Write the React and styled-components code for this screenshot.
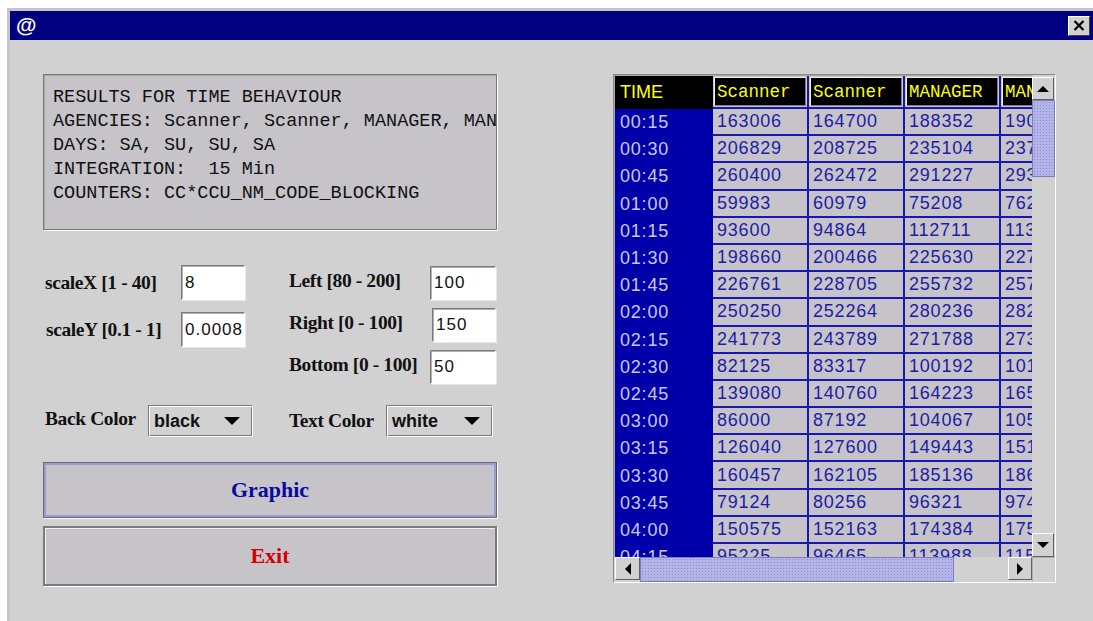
import React from 'react';
import styled, { createGlobalStyle } from 'styled-components';

const GlobalStyle = createGlobalStyle`
  html, body {
    margin: 0;
    padding: 0;
    background: #ffffff;
    overflow: hidden;
  }
  body {
    font-family: "Liberation Sans", Arial, sans-serif;
  }
`;

const Frame = styled.div`
  margin: 8px 0 0 7px;
  height: 613px;
  box-sizing: border-box;
  border-top: 3px solid #c6c6c6;
  border-left: 3px solid #c6c6c6;
  background: #d1d1d1;
  display: flex;
  flex-direction: column;
`;

const TitleBar = styled.div`
  height: 29px;
  background: #000080;
  display: flex;
  align-items: center;
  justify-content: space-between;
  padding: 0 3px 0 6px;
`;

const AppIcon = styled.span`
  color: #ffffff;
  font-family: "Liberation Sans", Arial, sans-serif;
  font-weight: bold;
  font-size: 21px;
  line-height: 1;
  margin-top: -2px;
`;

const CloseButton = styled.button`
  width: 22px;
  height: 20px;
  padding: 0;
  display: flex;
  align-items: center;
  justify-content: center;
  background: #d1d1d1;
  border: 1px solid;
  border-color: #ffffff #404040 #404040 #ffffff;
`;

const Body = styled.div`
  flex: 1;
  display: flex;
  align-items: flex-start;
  padding: 34px 0 0 33px;
`;

const LeftPanel = styled.div`
  width: 454px;
  display: flex;
  flex-direction: column;
`;

const ResultBox = styled.pre`
  margin: 0;
  height: 156px;
  box-sizing: border-box;
  padding: 11px 0 0 9px;
  background: #c6c4c8;
  border: 1px solid #7a7a7a;
  box-shadow: 1px 1px 0 #ffffff, inset 1px 1px 0 #a8a8a8;
  font-family: "Liberation Mono", "Courier New", monospace;
  font-size: 18.5px;
  line-height: 24px;
  color: #111111;
  overflow: hidden;
  white-space: pre;
`;

const ParamGrid = styled.div`
  margin-top: 35px;
  display: grid;
  grid-template-columns: 202px 209px;
  column-gap: 42px;
  align-items: start;
`;

const ParamColumn = styled.div`
  display: flex;
  flex-direction: column;
  gap: ${({ $gap }) => $gap}px;
  padding-top: ${({ $top }) => $top || 0}px;
`;

const FieldRow = styled.div`
  display: flex;
  align-items: center;
  justify-content: space-between;
`;

const Label = styled.span`
  padding-left: ${({ $indent }) => $indent || 2}px;
  margin-top: ${({ $lift }) => ($lift ? -$lift : 0)}px;
  font-family: "Liberation Serif", "Times New Roman", serif;
  font-weight: bold;
  font-size: 19.5px;
  letter-spacing: -0.4px;
  color: #111111;
  white-space: nowrap;
`;

const TextInput = styled.input`
  width: ${({ $w }) => $w}px;
  height: ${({ $h }) => $h || 34}px;
  box-sizing: border-box;
  padding: 0 0 0 3px;
  background: #ffffff;
  border: 1px solid;
  border-color: #7a7a7a #ffffff #ffffff #7a7a7a;
  box-shadow: inset 1px 1px 0 #b0b0b0, 1px 1px 0 #e8e8e8;
  font-family: "Liberation Sans", Arial, sans-serif;
  font-size: 17px;
  letter-spacing: 1px;
  color: #111111;
  outline: none;
`;

const ComboRow = styled.div`
  margin-top: 21px;
  display: grid;
  grid-template-columns: 210px 206px;
  column-gap: 34px;
`;

const ComboField = styled.div`
  display: flex;
  align-items: center;
  justify-content: space-between;
`;

const Combo = styled.div`
  width: ${({ $w }) => $w}px;
  height: 32px;
  box-sizing: border-box;
  display: flex;
  align-items: center;
  justify-content: space-between;
  padding: 0 12px 0 5px;
  border: 1px solid;
  border-color: #7a7a7a #ffffff #ffffff #7a7a7a;
  box-shadow: inset 1px 1px 0 #ffffff, inset -1px -1px 0 #7a7a7a;
  background: #d1d1d1;
  font-family: "Liberation Sans", Arial, sans-serif;
  font-weight: bold;
  font-size: 18px;
  color: #111111;
`;

const DownMark = styled.span`
  width: 0;
  height: 0;
  border-left: 8px solid transparent;
  border-right: 8px solid transparent;
  border-top: 8px solid #000000;
`;

const ButtonStack = styled.div`
  margin-top: 25px;
  display: flex;
  flex-direction: column;
  gap: 8px;
`;

const ActionButton = styled.button`
  height: ${({ $h }) => $h}px;
  box-sizing: border-box;
  background: #c6c4c8;
  border: ${({ $focused }) => ($focused ? '1px solid #6a6a6a' : '2px solid #7a7a7a')};
  box-shadow: ${({ $focused }) =>
    $focused
      ? 'inset 0 0 0 2px #9a9ad8, 1px 1px 0 #ffffff'
      : 'inset 1px 1px 0 #f0f0f0, 1px 1px 0 #ffffff'};
  font-family: "Liberation Serif", "Times New Roman", serif;
  font-weight: bold;
  font-size: 22px;
  color: ${({ $color }) => $color};
  padding: 0;
`;

/* ---------- table in a scroll pane ---------- */

const ScrollPane = styled.div`
  margin-left: 116px;
  width: 443px;
  height: 509px;
  box-sizing: border-box;
  display: grid;
  grid-template-columns: 1fr 23px;
  grid-template-rows: 1fr 25px;
  border: 1px solid;
  border-color: #8a8a8a #ffffff #ffffff #8a8a8a;
  box-shadow: inset 1px 1px 0 #a8a8a8;
  background: #d1d1d1;
`;

const Viewport = styled.div`
  overflow: hidden;
  padding: 1px 0 0 1px;
`;

const Grid = styled.div`
  display: grid;
  grid-template-columns: 98px repeat(4, 96px);
  grid-auto-rows: 27.2px;
  grid-template-rows: 33px;
  width: max-content;
`;

const TimeHead = styled.div`
  background: #000000;
  color: #ffff00;
  font-size: 18px;
  display: flex;
  align-items: center;
  padding-left: 5px;
`;

const HeadCell = styled.div`
  background: #c8c8c8;
  border-right: 2px solid #1818b0;
  border-bottom: 2px solid #1818b0;
  padding: 1px;
  display: flex;
`;

const HeadLabel = styled.div`
  flex: 1;
  background: #000000;
  border: 1px solid;
  border-color: #f0f0f0 #808080 #808080 #f0f0f0;
  color: #ffff00;
  font-family: "Liberation Mono", "Courier New", monospace;
  font-size: 17.5px;
  display: flex;
  align-items: center;
  padding-left: 2px;
  overflow: hidden;
  white-space: nowrap;
`;

const TimeCell = styled.div`
  background: #0000aa;
  color: #c8c8f4;
  font-size: 18px;
  letter-spacing: 0.8px;
  display: flex;
  align-items: center;
  padding-left: 5px;
`;

const ValueCell = styled.div`
  background: #c6c4c8;
  border-right: 2px solid #1818b0;
  border-bottom: 2px solid #1818b0;
  color: #1c1ca8;
  font-size: 18px;
  letter-spacing: 0.8px;
  display: flex;
  align-items: center;
  padding-left: 4px;
  overflow: hidden;
  white-space: nowrap;
`;

const VBar = styled.div`
  display: flex;
  flex-direction: column;
  padding-top: 2px;
  background: #d1d1d1;
`;

const HBar = styled.div`
  display: flex;
  background: #d1d1d1;
  padding-left: 1px;
`;

const Corner = styled.div`
  background: #d1d1d1;
  border-left: 1px solid #b0b0b0;
  border-top: 1px solid #b0b0b0;
`;

const ArrowButton = styled.div`
  width: ${({ $w }) => $w}px;
  height: ${({ $h }) => $h}px;
  box-sizing: border-box;
  flex-shrink: 0;
  display: flex;
  align-items: center;
  justify-content: center;
  background: #d1d1d1;
  border: 1px solid;
  border-color: #ffffff #606060 #606060 #ffffff;
`;

const Arrow = styled.span`
  width: 0;
  height: 0;
  border: 6px solid transparent;
  ${({ $dir }) => `border-${{ up: 'bottom', down: 'top', left: 'right', right: 'left' }[$dir]}-color: #000000;`}
  ${({ $dir }) => ({ up: 'margin-top: -6px;', down: 'margin-top: 6px;', left: 'margin-left: -6px;', right: 'margin-left: 6px;' }[$dir])}
`;

const Thumb = styled.div`
  box-sizing: border-box;
  flex-shrink: 0;
  width: ${({ $w }) => ($w ? `${$w}px` : 'auto')};
  height: ${({ $h }) => ($h ? `${$h}px` : 'auto')};
  border: 1px solid #7c7cc0;
  background-color: #b4b4e8;
  background-image: radial-gradient(#8c8cc8 0.8px, transparent 0.9px);
  background-size: 3px 3px;
`;

const Track = styled.div`
  flex: 1;
`;

const resultText = [
  'RESULTS FOR TIME BEHAVIOUR',
  'AGENCIES: Scanner, Scanner, MANAGER, MANAGER',
  'DAYS: SA, SU, SU, SA',
  'INTEGRATION:  15 Min',
  'COUNTERS: CC*CCU_NM_CODE_BLOCKING',
].join('\n');

const headers = ['Scanner', 'Scanner', 'MANAGER', 'MANAGER'];

const rows = [
  ['00:15', '163006', '164700', '188352', '190046'],
  ['00:30', '206829', '208725', '235104', '237000'],
  ['00:45', '260400', '262472', '291227', '293299'],
  ['01:00', '59983', '60979', '75208', '76204'],
  ['01:15', '93600', '94864', '112711', '113975'],
  ['01:30', '198660', '200466', '225630', '227436'],
  ['01:45', '226761', '228705', '255732', '257676'],
  ['02:00', '250250', '252264', '280236', '282250'],
  ['02:15', '241773', '243789', '271788', '273804'],
  ['02:30', '82125', '83317', '100192', '101384'],
  ['02:45', '139080', '140760', '164223', '165903'],
  ['03:00', '86000', '87192', '104067', '105259'],
  ['03:15', '126040', '127600', '149443', '151003'],
  ['03:30', '160457', '162105', '185136', '186784'],
  ['03:45', '79124', '80256', '96321', '97453'],
  ['04:00', '150575', '152163', '174384', '175972'],
  ['04:15', '95225', '96465', '113988', '115228'],
];

const CloseGlyph = () => (
  <svg width="12" height="11" viewBox="0 0 12 11">
    <path d="M1.5 1 L10.5 10 M10.5 1 L1.5 10" stroke="#000" strokeWidth="2.2" />
  </svg>
);

export default function App() {
  return (
    <>
      <GlobalStyle />
      <Frame>
        <TitleBar>
          <AppIcon>@</AppIcon>
          <CloseButton>
            <CloseGlyph />
          </CloseButton>
        </TitleBar>
        <Body>
          <LeftPanel>
            <ResultBox>{resultText}</ResultBox>

            <ParamGrid>
              <ParamColumn $gap={12} $top={0}>
                <FieldRow>
                  <Label>scaleX [1 - 40]</Label>
                  <TextInput $w={64} $h={35} defaultValue="8" />
                </FieldRow>
                <FieldRow>
                  <Label $indent={3}>scaleY [0.1 - 1]</Label>
                  <TextInput $w={64} $h={35} defaultValue="0.0008" />
                </FieldRow>
              </ParamColumn>
              <ParamColumn $gap={8} $top={1}>
                <FieldRow>
                  <Label $indent={0} $lift={5}>Left [80 - 200]</Label>
                  <TextInput $w={66} defaultValue="100" />
                </FieldRow>
                <FieldRow>
                  <Label $indent={0} $lift={5}>Right [0 - 100]</Label>
                  <TextInput $w={64} defaultValue="150" />
                </FieldRow>
                <FieldRow>
                  <Label $indent={2} $lift={5}>Bottom [0 - 100]</Label>
                  <TextInput $w={66} defaultValue="50" />
                </FieldRow>
              </ParamColumn>
            </ParamGrid>

            <ComboRow>
              <ComboField>
                <Label $lift={4}>Back Color</Label>
                <Combo $w={105}>
                  black
                  <DownMark />
                </Combo>
              </ComboField>
              <ComboField>
                <Label $indent={0}>Text Color</Label>
                <Combo $w={107}>
                  white
                  <DownMark />
                </Combo>
              </ComboField>
            </ComboRow>

            <ButtonStack>
              <ActionButton $h={56} $focused $color="#0a0aa0">Graphic</ActionButton>
              <ActionButton $h={60} $color="#d40000">Exit</ActionButton>
            </ButtonStack>
          </LeftPanel>

          <ScrollPane>
            <Viewport>
              <Grid>
                <TimeHead>TIME</TimeHead>
                {headers.map((h, i) => (
                  <HeadCell key={i}>
                    <HeadLabel>{h}</HeadLabel>
                  </HeadCell>
                ))}
                {rows.map((r) => (
                  <React.Fragment key={r[0]}>
                    <TimeCell>{r[0]}</TimeCell>
                    {r.slice(1).map((v, i) => (
                      <ValueCell key={i}>{v}</ValueCell>
                    ))}
                  </React.Fragment>
                ))}
              </Grid>
            </Viewport>
            <VBar>
              <ArrowButton $w={22} $h={23}>
                <Arrow $dir="up" />
              </ArrowButton>
              <Thumb $h={77} />
              <Track />
              <ArrowButton $w={22} $h={24}>
                <Arrow $dir="down" />
              </ArrowButton>
            </VBar>
            <HBar>
              <ArrowButton $w={25} $h={23}>
                <Arrow $dir="left" />
              </ArrowButton>
              <Thumb $w={314} />
              <Track />
              <ArrowButton $w={24} $h={23}>
                <Arrow $dir="right" />
              </ArrowButton>
            </HBar>
            <Corner />
          </ScrollPane>
        </Body>
      </Frame>
    </>
  );
}
